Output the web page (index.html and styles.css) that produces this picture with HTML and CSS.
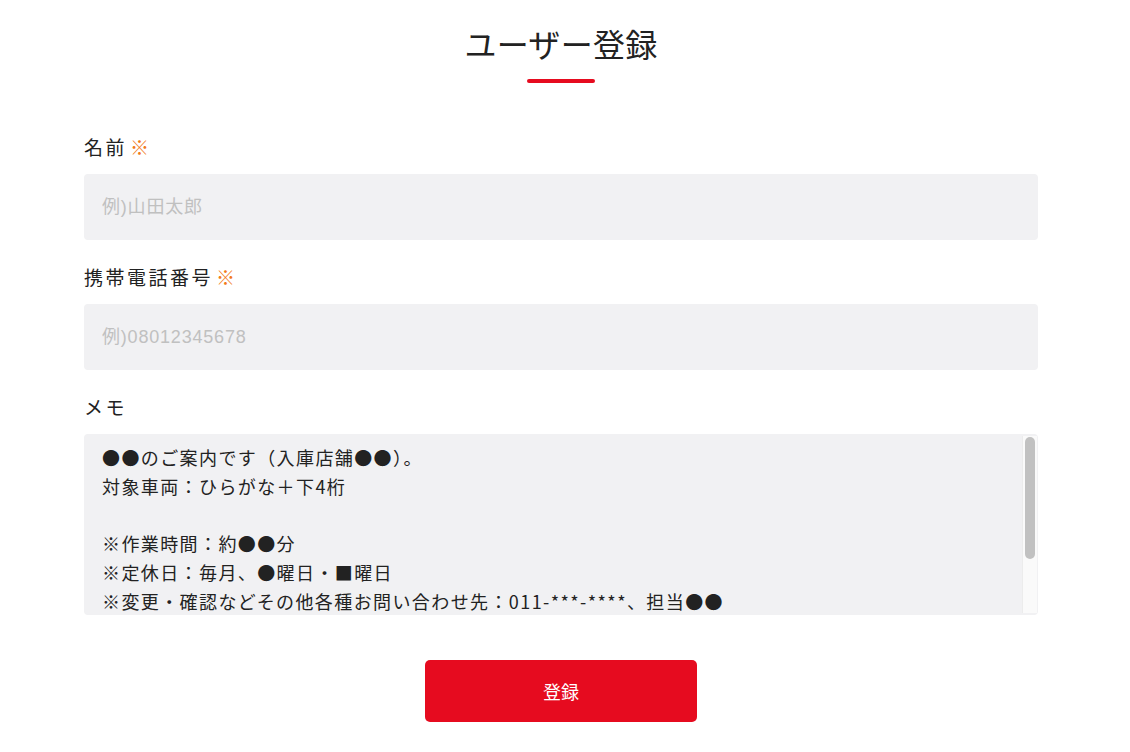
FILE: index.html
```html
<!DOCTYPE html>
<html lang="ja">
<head>
	<meta charset="utf-8" />
	<meta name="viewport" content="width=device-width, initial-scale=1" />
	<title>ユーザー登録</title>
	<link rel="stylesheet" href="styles.css">
</head>
<body>

	<main>

		<header>
			<h1>ユーザー登録</h1>
			<span class="bar"></span>
		</header>

		<form>
			<div class="field">
				<label for="name">名前<em>※</em></label>
				<input id="name" type="text" placeholder="例)山田太郎" />
			</div>

			<div class="field">
				<label for="tel">携帯電話番号<em>※</em></label>
				<input id="tel" type="tel" placeholder="例)08012345678" />
			</div>

			<div class="field">
				<label for="memo">メモ</label>
				<div class="memo">
					<textarea id="memo">
●●のご案内です（入庫店舗●●）。
対象車両：ひらがな＋下4桁

※作業時間：約●●分
※定休日：毎月、●曜日・■曜日
※変更・確認などその他各種お問い合わせ先：011-***-****、担当●●


</textarea>
					<div class="scroll"><span></span></div>
				</div>
			</div>

			<div class="submit">
				<button type="button">登録</button>
			</div>
		</form>

	</main>

</body>
</html>
```

FILE: styles.css
```css
* {
	box-sizing: border-box;
	font-family: "Noto Sans CJK JP", "Noto Sans", sans-serif;
}

body {
	margin: 0;
	padding: 0;
	background: #ffffff;
	color: #222222;
}

main {
	width: 954px;
	margin: 0 auto;
	padding: 19px 0 0 0;
	position: relative;
	left: -4px;
}

/*Header*/
header {
	display: flex;
	flex-direction: column;
	align-items: center;
}
header h1 {
	margin: 0;
	font-size: 32px;
	font-weight: 400;
	line-height: 48px;
	letter-spacing: 0.3px;
}
header .bar {
	display: block;
	width: 68px;
	height: 4px;
	margin-top: 12px;
	border-radius: 2px;
	background: #e60b1f;
}

/*Form*/
form {
	padding-top: 51px;
}
.field {
	display: flex;
	flex-direction: column;
	margin-bottom: 24px;
}
.field label {
	font-size: 19px;
	line-height: 26px;
	letter-spacing: 2.5px;
	margin-bottom: 14px;
}
.field label em {
	font-style: normal;
	font-size: 19px;
	color: #f27a1a;
	margin-left: 3px;
}
.field input,
.field textarea {
	width: 100%;
	border: none;
	outline: none;
	border-radius: 4px;
	background: #f1f1f3;
	color: #222222;
}
.field input {
	height: 66px;
	padding: 0 18px;
	font-size: 18px;
	letter-spacing: 0.8px;
	font-family: "Liberation Sans", "Noto Sans CJK JP", sans-serif;
}
.field input::placeholder {
	color: #c0c0c0;
}

/*Memo*/
.memo {
	position: relative;
}
.memo textarea {
	display: block;
	height: 181px;
	padding: 9px 30px 12px 18px;
	font-size: 18px;
	line-height: 28.8px;
	letter-spacing: 1.4px;
	resize: none;
	overflow: hidden;
}
.memo .scroll {
	position: absolute;
	top: 2px;
	right: 1px;
	bottom: 2px;
	width: 15px;
	background: #fafafa;
	border-left: 1px solid #ececec;
	padding: 1px 2px 0 2px;
}
.memo .scroll span {
	display: block;
	height: 122px;
	border-radius: 5px;
	background: #c1c1c1;
}

/*Submit*/
.submit {
	display: flex;
	justify-content: center;
	padding-top: 21px;
}
.submit button {
	width: 272px;
	height: 62px;
	border: none;
	border-radius: 5px;
	background: #e60b1f;
	color: #ffffff;
	font-size: 18px;
	cursor: pointer;
}
```
